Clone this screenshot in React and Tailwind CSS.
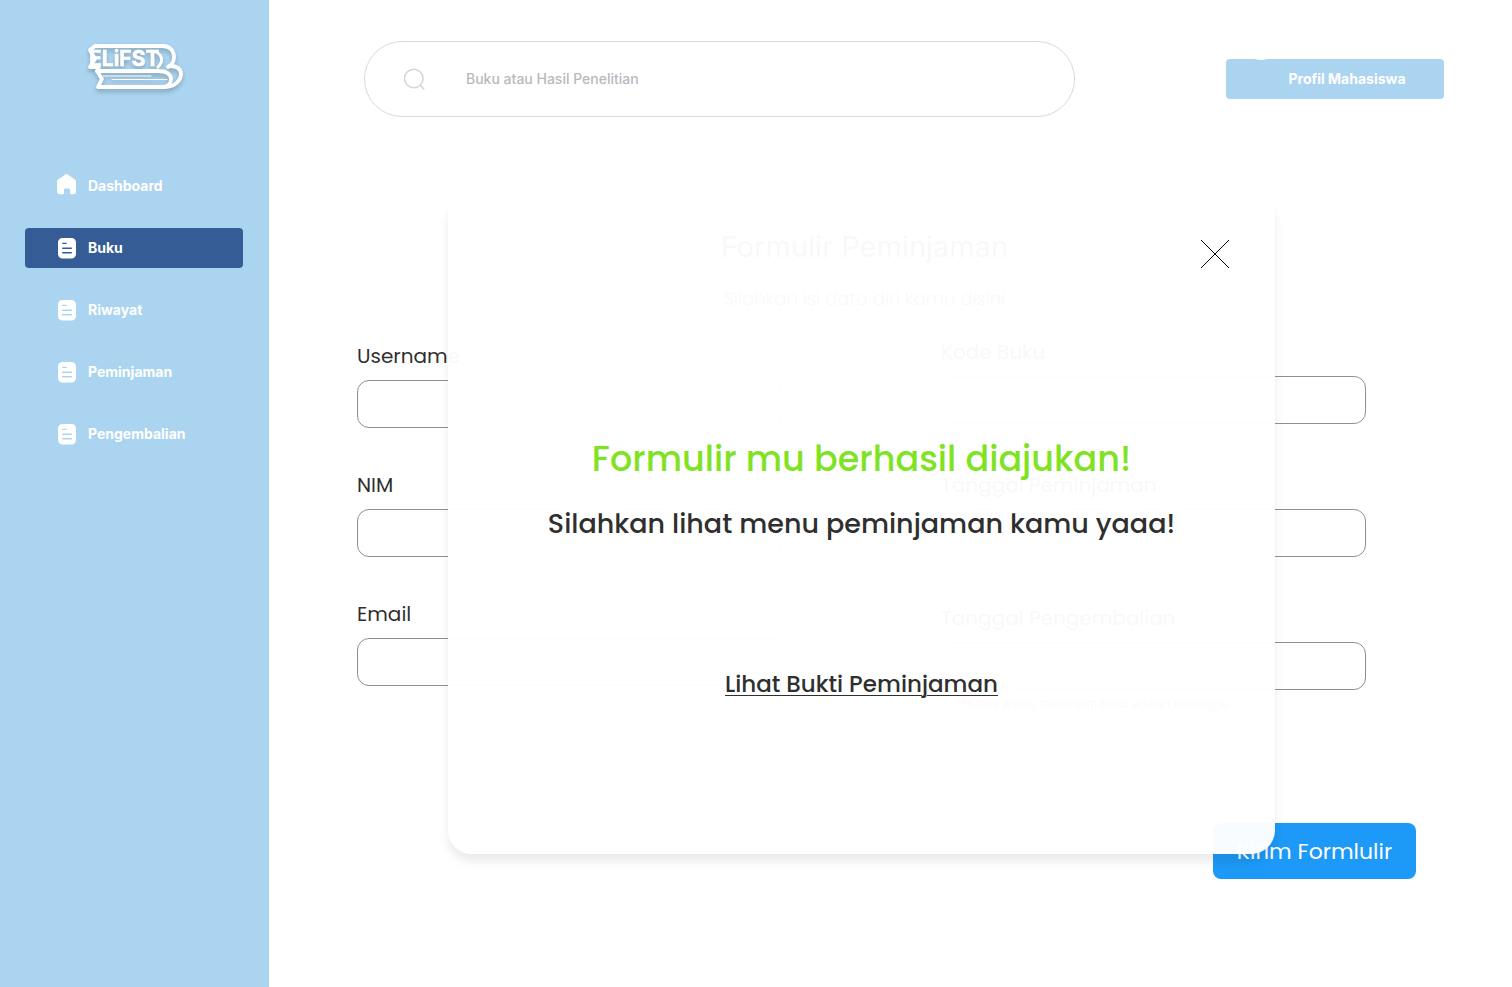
import React from "react";

function HomeIcon() {
  return (
    <svg className="h-6 w-5 shrink-0" viewBox="0 0 20 24" fill="white" aria-hidden="true">
      <path d="M8.300.6a2.200 2.200 0 0 1 2.600 0l6.900 4.800c.8.6 1.200 1.400 1.200 2.300v9.900a2.600 2.600 0 0 1-2.600 2.600h-2.600c-.5 0-.8-.3-.8-.8v-3.400c0-.9-.6-1.500-1.500-1.500H8.500c-.9 0-1.500.6-1.500 1.500v3.400c0 .5-.3.8-.8.8H2.600A2.600 2.600 0 0 1 0 17.600V7.700c0-.9.500-1.800 1.200-2.300z" />
    </svg>
  );
}

function DocIcon() {
  return (
    <svg className="h-[21px] w-5 shrink-0" viewBox="0 0 20 21" aria-hidden="true">
      <path
        fillRule="evenodd"
        fill="white"
        d="M5.500 0h9A4.500 4.500 0 0 1 19 4.500v11.500a4.500 4.500 0 0 1-4.500 4.500h-9A4.500 4.500 0 0 1 1 16V4.500A4.500 4.500 0 0 1 5.500 0zM5.700 4.700a.6.6 0 0 0 0 1.300h3.500a.6.6 0 0 0 0-1.300zM5.700 9.500a.6.6 0 0 0 0 1.500h8.600a.6.6 0 0 0 0-1.500zM5.700 14.100a.6.6 0 0 0 0 1.400h8.600a.6.6 0 0 0 0-1.400z"
      />
    </svg>
  );
}

function Logo() {
  return (
    <svg
      className="h-[52px] w-[98px] overflow-visible drop-shadow-[0_3px_2px_rgba(0,0,0,0.22)]"
      viewBox="0 0 98 52"
      fill="none"
      stroke="white"
      strokeLinejoin="round"
      strokeLinecap="round"
      role="img"
      aria-label="ELiFST"
    >
      <path strokeWidth="3.800" d="M10 3H78c7 0 11 5 11 11 0 4-2 8-6 10M10 3 5 7l5 9-5 8h9" />
      <path strokeWidth="3" d="M71 9c6 3 8 9 2 15" />
      <path strokeWidth="3.800" d="M12 28l5 8-4 8h67c9 0 16-6 16-13 0-5-4-8-11-8" />
      <path strokeWidth="3.800" d="M12 28h61c8 0 13 3 13 8s-4 8-9 8" />
      <path strokeWidth="1" d="M18 33h48M27 36.500h55" />
      <text x="4" y="23" fill="white" stroke="white" strokeWidth="0.500" fontSize="21" fontWeight="700" fontFamily="Inter, sans-serif">
        ELiFST
      </text>
    </svg>
  );
}

const navItems = ["Dashboard", "Buku", "Riwayat", "Peminjaman", "Pengembalian"];

function Sidebar() {
  return (
    <aside className="w-[269px] shrink-0 bg-[#abd4f0] pr-[26px] pl-[25px]">
      <div className="mt-[43px] flex justify-center">
        <Logo />
      </div>
      <nav className="mt-[71px] flex flex-col gap-[22px]">
        {navItems.map((name) => (
          <a
            key={name}
            href="#"
            aria-current={name === "Buku" ? "page" : undefined}
            className={
              name === "Buku"
                ? "flex h-10 items-center gap-[11px] rounded bg-[#355c95] px-8 text-sm font-bold text-white"
                : "flex h-10 items-center gap-[11px] rounded px-8 text-sm font-bold text-white"
            }
          >
            {name === "Dashboard" ? <HomeIcon /> : <DocIcon />}
            {name}
          </a>
        ))}
      </nav>
    </aside>
  );
}

function Header() {
  return (
    <header className="flex items-center justify-between gap-8 pt-[41px] pr-[68px] pl-[95px]">
      <label className="flex h-[76px] max-w-[711px] flex-1 items-center rounded-full border border-[#d9d9d9] pr-10 pl-[39px]">
        <svg className="h-[22px] w-[22px] shrink-0" viewBox="0 0 22 22" fill="none" stroke="#d5d5d7" strokeWidth="1.500" strokeLinecap="round" aria-hidden="true">
          <circle cx="9.800" cy="10.500" r="9.300" />
          <path d="M16.500 17.500l3.300 3.500" />
        </svg>
        <input
          type="search"
          aria-label="Buku atau Hasil Penelitian"
          placeholder="Buku atau Hasil Penelitian"
          className="ml-10 min-w-0 flex-1 bg-transparent pb-px text-sm font-medium outline-none placeholder:text-[#b8b9be]"
        />
      </label>
      <button
        type="button"
        className="relative h-10 w-[218px] shrink-0 overflow-hidden rounded bg-[#abd4f0] pl-6 text-sm font-bold text-white"
      >
        <span className="absolute -top-[31px] left-[19px] h-8 w-8 rounded-full bg-white" />
        Profil Mahasiswa
      </button>
    </header>
  );
}

function Field({ id, label, type = "text" }) {
  return (
    <div className="flex flex-col gap-[10px]">
      <label htmlFor={id} className="text-xl leading-7 text-[#2f2f2f]">
        {label}
      </label>
      <input id={id} type={type} className="h-12 w-full rounded-xl border border-[#8f8f8f] bg-white px-4 outline-none" />
    </div>
  );
}

function SuccessDialog() {
  return (
    <div
      role="dialog"
      aria-labelledby="dialog-title"
      className="absolute top-0 right-[141px] left-[91px] flex flex-col items-center rounded-3xl bg-white/97 pt-[241px] pb-[152px] text-center text-[#2f2f2f] shadow-[0_8px_10px_rgba(0,0,0,0.08)]"
    >
      <button type="button" aria-label="Tutup" className="absolute top-12 right-[46px]">
        <svg className="h-7 w-7" viewBox="0 0 28 28" stroke="black" strokeWidth="1" aria-hidden="true">
          <path d="M0 0 28 28M28 0 0 28" />
        </svg>
      </button>
      <h2 id="dialog-title" className="text-[35px] leading-[52px] font-medium text-[#7fe324]">
        Formulir mu berhasil diajukan!
      </h2>
      <p className="mt-[19px] text-[27px] leading-10 font-medium">Silahkan lihat menu peminjaman kamu yaaa!</p>
      <a href="#" className="mt-[122px] text-[23px] leading-9 font-medium underline decoration-1 underline-offset-3">
        Lihat Bukti Peminjaman
      </a>
    </div>
  );
}

export default function App() {
  return (
    <div className="flex min-h-screen bg-white font-['Inter',sans-serif]">
      <Sidebar />
      <main className="min-w-0 flex-1">
        <Header />
        <section className="relative mt-[75px] mr-24 ml-[88px] font-['Poppins','Inter',sans-serif]">
          <form className="pt-[35px]">
            <div className="mr-11 text-center text-[#2f2f2f]">
              <h1 className="font-['Inter',sans-serif] text-[29px] leading-10">Formulir Peminjaman</h1>
              <p className="mt-5 text-lg leading-6 font-light">Silahkan isi data diri kamu disini</p>
            </div>
            <div className="mt-[27px] mr-[50px] flex justify-between gap-8">
              <div className="flex max-w-[425px] flex-1 flex-col gap-[43px] pt-1">
                <Field id="username" label="Username" />
                <Field id="nim" label="NIM" />
                <Field id="email" label="Email" type="email" />
              </div>
              <div className="max-w-[425px] flex-1">
                <div className="flex flex-col gap-[47px]">
                  <Field id="kode" label="Kode Buku" />
                  <Field id="pinjam" label="Tanggal Peminjaman" />
                  <Field id="kembali" label="Tanggal Pengembalian" />
                </div>
                <p className="mt-[6px] pl-5 font-['Inter',sans-serif] text-xs leading-4 text-[#e02020]">
                  *batas waktu meminjam buku adalah seminggu
                </p>
              </div>
            </div>
            <div className="mt-[111px] flex justify-end">
              <button type="submit" className="h-14 w-[203px] rounded-lg bg-[#1d99f7] text-[22px] text-white">
                Kirim Formlulir
              </button>
            </div>
          </form>
          <SuccessDialog />
        </section>
      </main>
    </div>
  );
}
